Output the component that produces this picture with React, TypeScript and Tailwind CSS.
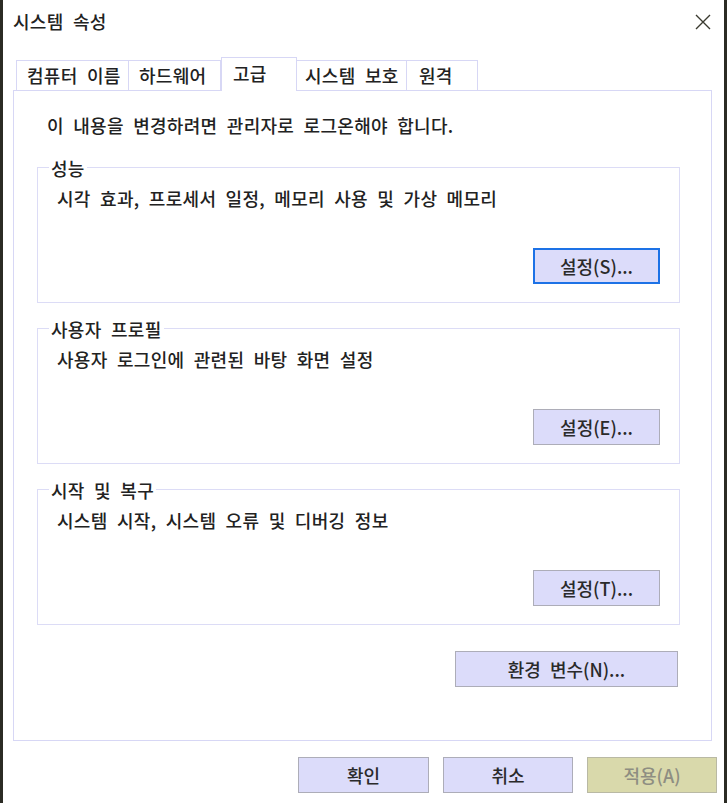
import React from "react";

const font = "font-['Noto_Sans_CJK_KR','Noto_Sans',sans-serif] font-medium [word-spacing:5px] tracking-[0.3px]";

function Tab({ label, w, pl, selected }: { label: string; w: string; pl: string; selected?: boolean }) {
  if (selected) {
    return (
      <div
        className={`${w} ${pl} h-[34px] -mb-px bg-white border border-b-0 border-[#d7d7f5] flex items-start pt-[3px] text-[18px] leading-[24px] text-[#222222] relative z-10`}
      >
        {label}
      </div>
    );
  }
  return (
    <div
      className={`${w} ${pl} h-[30px] border border-b-0 border-[#d7d7f5] -ml-px first:ml-0 flex items-center pb-[2px] text-[18px] leading-[24px] text-[#222222]`}
    >
      {label}
    </div>
  );
}

function Btn({ label, w, focused, disabled }: { label: string; w: string; focused?: boolean; disabled?: boolean }) {
  let cls = "bg-[#dcdcfa] border border-[#adadb8] text-[#2a2a2a]";
  if (focused) cls = "bg-[#dcdcfa] border-2 border-[#1d72e6] text-[#2a2a2a]";
  if (disabled) cls = "bg-[#d9d9ab] border border-[#b9b9a4] text-[#8e8e82]";
  return (
    <div className={`${w} h-[36px] ${cls} flex items-center justify-center text-[18px] leading-[24px] tracking-normal`}>
      {label}
    </div>
  );
}

function Group({ legend, desc, btn }: { legend: string; desc: string; btn: string; }) {
  return (
    <div className="relative w-[643px] border border-[#dcdcf6] pt-[18px] pb-[18px]">
      <span className="absolute left-[11px] -top-[12px] bg-white px-[2px] text-[18px] leading-[24px] text-[#222222]">
        {legend}
      </span>
      <div className="pl-[19px] text-[18px] leading-[24px] text-[#222222]">{desc}</div>
      <div className="flex justify-end pr-[19px] mt-[38px]">
        <Btn label={btn} w="w-[127px]" focused={btn === "설정(S)..."} />
      </div>
    </div>
  );
}

export default function App() {
  return (
    <div className={`${font} w-[727px] h-[803px] bg-white border-l-[3px] border-r-[3px] border-[#2b2b24] flex flex-col overflow-hidden`}>
      {/* title bar */}
      <div className="h-[44px] flex items-center justify-between pl-[10px] pr-[13px] pb-[3px]">
        <span className="text-[18px] leading-[24px] text-[#222222]">시스템 속성</span>
        <svg width="16" height="16" viewBox="0 0 16 16" className="mt-[3px]">
          <path d="M1 1 L15 15 M15 1 L1 15" stroke="#3a3a30" strokeWidth="1.4" fill="none" />
        </svg>
      </div>

      {/* tabs */}
      <div className="mt-[13px] h-[33px] flex items-end pl-[13px]">
        <Tab label="컴퓨터 이름" w="w-[113px]" pl="pl-[10px]" />
        <Tab label="하드웨어" w="w-[93px]" pl="pl-[10px]" />
        <Tab label="고급" w="w-[76px]" pl="pl-[11px]" selected />
        <Tab label="시스템 보호" w="w-[111px]" pl="pl-[8px]" />
        <Tab label="원격" w="w-[72px]" pl="pl-[12px]" />
      </div>

      {/* panel */}
      <div className="ml-[10px] mr-[12px] h-[651px] border border-[#d7d7f5] pl-[23px] pt-[22px] flex flex-col">
        <div className="pl-[10px] text-[18px] leading-[24px] text-[#222222]">
          이 내용을 변경하려면 관리자로 로그온해야 합니다.
        </div>
        <div className="mt-[30px] flex flex-col gap-[25px]">
          <Group legend="성능" desc="시각 효과, 프로세서 일정, 메모리 사용 및 가상 메모리" btn="설정(S)..." />
          <Group legend="사용자 프로필" desc="사용자 로그인에 관련된 바탕 화면 설정" btn="설정(E)..." />
          <Group legend="시작 및 복구" desc="시스템 시작, 시스템 오류 및 디버깅 정보" btn="설정(T)..." />
        </div>
        <div className="w-[643px] flex justify-end pr-[2px] mt-[26px]">
          <Btn label="환경 변수(N)..." w="w-[223px]" />
        </div>
      </div>

      {/* bottom buttons */}
      <div className="mt-[16px] flex justify-end pr-[7px] gap-[14px]">
        <Btn label="확인" w="w-[131px]" />
        <Btn label="취소" w="w-[130px]" />
        <Btn label="적용(A)" w="w-[130px]" disabled />
      </div>
    </div>
  );
}
